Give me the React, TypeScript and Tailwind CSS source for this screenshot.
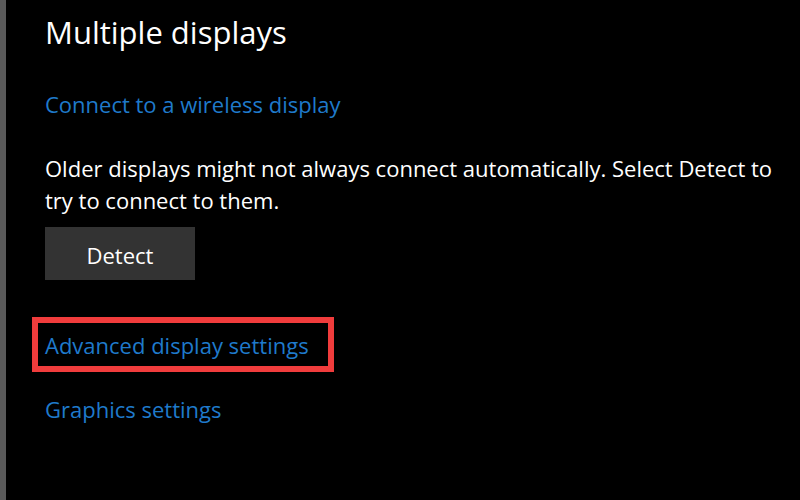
import React from 'react';

const font = { fontFamily: '"Segoe UI", "Open Sans", "Noto Sans", sans-serif' };

export default function App() {
  return (
    <div className="flex h-[500px] w-[800px] overflow-hidden bg-black" style={font}>
      {/* left window edge */}
      <div className="w-[6px] shrink-0 bg-[#5a5a5a]" />

      <div className="flex flex-col pl-[39px] pt-[12px]">
        <h1 className="text-[31px] leading-[40px] font-normal text-white">Multiple displays</h1>

        <a className="mt-[38px] text-[22px] leading-[28px] text-[#1f7acb]">Connect to a wireless display</a>

        <p className="mt-[34px] w-[745px] text-[22px] leading-[32px] text-white">
          Older displays might not always connect automatically. Select Detect to try to connect to them.
        </p>

        <button className="mt-[11px] h-[53px] w-[150px] bg-[#333333] pt-[3px] text-[22px] text-white">Detect</button>

        {/* highlighted link */}
        <div className="mt-[37px] -ml-[13px] w-[302px] border-[6px] border-[#f03c3c] pt-[8px] pb-[7px] pl-[7px]">
          <a className="block text-[22px] leading-[28px] text-[#1f7acb]">Advanced display settings</a>
        </div>

        <a className="mt-[23px] text-[22px] leading-[28px] text-[#1f7acb]">Graphics settings</a>
      </div>
    </div>
  );
}
